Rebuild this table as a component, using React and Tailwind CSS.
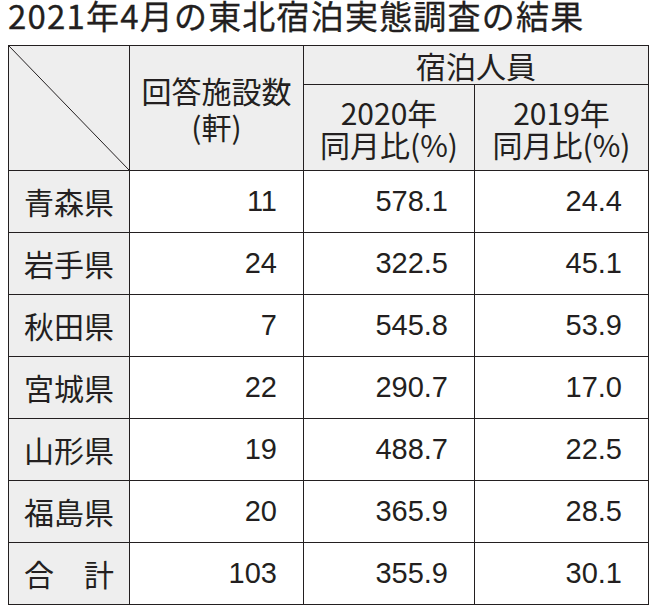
const rows = [
  ["青森県", "11", "578.1", "24.4"],
  ["岩手県", "24", "322.5", "45.1"],
  ["秋田県", "7", "545.8", "53.9"],
  ["宮城県", "22", "290.7", "17.0"],
  ["山形県", "19", "488.7", "22.5"],
  ["福島県", "20", "365.9", "28.5"],
  ["合　計", "103", "355.9", "30.1"],
];

const cell = "border border-[#231f20] p-0";
const head = `${cell} bg-[#eeeeee] font-normal text-center align-middle`;

export default function App() {
  return (
    <div className="w-[656px] h-[610px] bg-white text-[#231f20] font-['Noto_Sans_CJK_JP',sans-serif]">
      <h1 className="h-[45px] pl-[8px] text-[33px] leading-[30px] font-normal tracking-[1.2px] whitespace-nowrap [-webkit-text-stroke:0.3px_#231f20]">
        2021年4月の東北宿泊実態調査の結果
      </h1>
      <table className="ml-[8px] w-[640px] table-fixed border-collapse text-[30px]">
        <colgroup>
          <col className="w-[121px]" />
          <col className="w-[174px]" />
          <col className="w-[171px]" />
          <col className="w-[174px]" />
        </colgroup>
        <thead>
          <tr className="h-[39px]">
            <th rowSpan={2} className={`${head} relative`}>
              {/* diagonal rule in the corner cell */}
              <svg className="absolute inset-0 w-full h-full" viewBox="0 0 100 100" preserveAspectRatio="none">
                <line x1="0" y1="0" x2="100" y2="100" stroke="#231f20" strokeWidth="1" vectorEffect="non-scaling-stroke" />
              </svg>
            </th>
            <th rowSpan={2} className={`${head} leading-[36px]`}>
              回答施設数
              <br />
              (軒)
            </th>
            <th colSpan={2} className={`${head} leading-[36px]`}>
              宿泊人員
            </th>
          </tr>
          <tr className="h-[86px]">
            <th className={`${head} leading-[32px]`}>
              2020年
              <br />
              同月比(%)
            </th>
            <th className={`${head} leading-[32px]`}>
              2019年
              <br />
              同月比(%)
            </th>
          </tr>
        </thead>
        <tbody>
          {rows.map(([pref, count, y2020, y2019]) => (
            <tr key={pref} className="h-[62px]">
              <td className={`${cell} bg-[#eeeeee] text-center`}>{pref}</td>
              {[count, y2020, y2019].map((v, i) => (
                <td
                  key={i}
                  className={`${cell} bg-white text-right pr-[26px] text-[29px] font-['Liberation_Sans',sans-serif]`}
                >
                  {v}
                </td>
              ))}
            </tr>
          ))}
        </tbody>
      </table>
    </div>
  );
}
